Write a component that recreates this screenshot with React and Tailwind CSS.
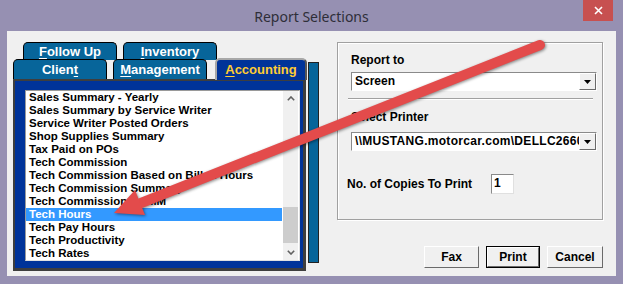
const reports = [
  'Sales Summary - Yearly',
  'Sales Summary by Service Writer',
  'Service Writer Posted Orders',
  'Shop Supplies Summary',
  'Tax Paid on POs',
  'Tech Commission',
  'Tech Commission Based on Billed Hours',
  'Tech Commission Summary',
  'Tech Commission by MM',
  'Tech Hours',
  'Tech Pay Hours',
  'Tech Productivity',
  'Tech Rates',
];

const font = "font-['Liberation_Sans',Arial,sans-serif]";

function Tab({ children, className = '' }) {
  return (
    <div
      className={`h-full flex items-center justify-center rounded-t-[5px] border border-b-0 border-black bg-[#07659a] text-white text-[13px] font-bold ${className}`}
    >
      {children}
    </div>
  );
}

function Combo({ value, className = '' }) {
  return (
    <div className="flex h-[19px] w-[246px] bg-white border border-t-[#8a8a8a] border-l-[#8a8a8a] border-r-white border-b-white">
      <div className={`flex-1 overflow-hidden whitespace-nowrap pl-[3px] text-[12px] leading-[17px] font-bold text-black ${className}`}>
        {value}
      </div>
      <div className="w-[17px] flex items-center justify-center bg-[#f0f0f0] border border-t-white border-l-white border-r-[#6a6a6a] border-b-[#6a6a6a]">
        <svg width="7" height="4" viewBox="0 0 7 4">
          <polygon points="0,0 7,0 3.5,4" fill="#000" />
        </svg>
      </div>
    </div>
  );
}

function Button({ children, width, isDefault }) {
  return (
    <div className={`h-[22px] ${width} ${isDefault ? 'border border-black' : ''}`}>
      <div className="h-full flex items-center justify-center bg-[#f0f0f0] border border-t-white border-l-white border-r-[#6a6a6a] border-b-[#6a6a6a] text-[12px] font-bold text-black">
        {children}
      </div>
    </div>
  );
}

export default function App() {
  return (
    <div className={`relative w-[623px] h-[284px] bg-[#9690b2] flex flex-col overflow-hidden ${font}`}>
      {/* Title bar */}
      <div className="relative h-[31px] flex items-center justify-center">
        <span className="font-['Noto_Sans',sans-serif] text-[14px] text-[#2e2e38] pt-[1px]">Report Selections</span>
        <div className="absolute right-[10px] top-0 w-[30px] h-[21px] bg-[#c75050] flex items-center justify-center">
          <svg width="9" height="9" viewBox="0 0 9 9">
            <path d="M1 1 L8 8 M8 1 L1 8" stroke="#fff" strokeWidth="1.6" />
          </svg>
        </div>
      </div>

      {/* Client area */}
      <div className="mx-[7px] h-[245px] bg-[#f0f0f0] flex">
        {/* Tab control */}
        <div className="ml-[6px] mt-[11px] flex">
          <div className="w-[294px] flex flex-col">
            <div className="flex h-[18px] pl-[10px] gap-[6px]">
              <Tab className="w-[94px]"><span><span className="underline underline-offset-2">F</span>ollow Up</span></Tab>
              <Tab className="w-[94px]"><span><span className="underline underline-offset-2">I</span>nventory</span></Tab>
            </div>
            <div className="flex h-[20px] -mt-[1px]">
              <Tab className="w-[94px]"><span>Clien<span className="underline underline-offset-2">t</span></span></Tab>
              <Tab className="w-[94px] ml-[6px]"><span><span className="underline underline-offset-2">M</span>anagement</span></Tab>
              <div className="relative z-10 w-[92px] ml-[8px] h-[22px] -mt-[1px] -mb-[1px] rounded-t-[5px] border-2 border-b-0 border-t-[#a8a8a8] border-l-[#a8a8a8] border-r-[#555] bg-[#003399] flex items-center justify-center text-[13px] font-bold text-[#ffcc33]">
                <span><span className="underline underline-offset-2">A</span>ccounting</span>
              </div>
            </div>
            <div className="w-[293px] h-[192px] bg-[#003399] border-2 border-[#3e3e3e] border-r-[3px] border-b-[3px]">
              <div className="ml-[10px] mt-[9px] w-[275px] h-[171px] bg-white border border-t-[#9a9a9a] border-l-[#9a9a9a] border-r-[#e0e0e0] border-b-[#e0e0e0] flex">
                <div className="w-[256px] flex flex-col">
                  {reports.map((r) => (
                    <div
                      key={r}
                      className={`h-[13px] leading-[13px] pl-[3px] text-[11.5px] font-bold whitespace-nowrap ${
                        r === 'Tech Hours' ? 'bg-[#3399ff] text-white' : 'text-black'
                      }`}
                    >
                      {r}
                    </div>
                  ))}
                </div>
                <div className="ml-[1px] w-[15px] flex flex-col bg-[#f0f0f0]">
                  <div className="h-[15px] flex items-center justify-center">
                    <svg width="8" height="5" viewBox="0 0 8 5">
                      <polyline points="0.8,4.2 4,1 7.2,4.2" fill="none" stroke="#606060" strokeWidth="1.6" />
                    </svg>
                  </div>
                  <div className="flex-1">
                    <div className="mt-[101px] h-[36px] bg-[#cdcdcd]" />
                  </div>
                  <div className="h-[15px] flex items-center justify-center">
                    <svg width="8" height="5" viewBox="0 0 8 5">
                      <polyline points="0.8,0.8 4,4 7.2,0.8" fill="none" stroke="#606060" strokeWidth="1.6" />
                    </svg>
                  </div>
                </div>
              </div>
            </div>
          </div>
          <div className="ml-[1px] mt-[20px] w-[11px] h-[201px] bg-[#07659a] border border-[#222]" />
        </div>

        {/* Right column */}
        <div className="ml-[18px] mt-[11px] flex flex-col">
          <div className="w-[266px] h-[178px] border border-[#a0a0a0] shadow-[inset_1px_1px_0_#fff,1px_1px_0_#fff] pt-[10px] flex flex-col">
            <div className="ml-[13px] h-[14px] leading-[14px] text-[12px] font-bold text-black">Report to</div>
            <div className="ml-[13px] mt-[5px]"><Combo value="Screen" /></div>
            <div className="ml-[10px] mt-[7px] w-[245px] h-[2px] border-t border-t-[#a0a0a0] border-b border-b-white" />
            <div className="ml-[13px] mt-[10px] h-[14px] leading-[14px] text-[12px] font-bold text-black">Select Printer</div>
            <div className="ml-[13px] mt-[8px]"><Combo value="\\MUSTANG.motorcar.com\DELLC2660" className="tracking-[0.3px]" /></div>
            <div className="ml-[9px] mt-[23px] h-[20px] flex items-center">
              <div className="w-[144px] text-[12px] font-bold text-black">No. of Copies To Print</div>
              <div className="w-[23px] h-[20px] bg-white border border-t-[#8a8a8a] border-l-[#8a8a8a] border-r-[#e0e0e0] border-b-[#e0e0e0] pl-[2px] text-[12px] leading-[17px] font-bold text-black">
                1
              </div>
            </div>
          </div>
          <div className="mt-[26px] flex justify-end gap-[7px]">
            <Button width="w-[55px]">Fax</Button>
            <Button width="w-[54px]" isDefault>Print</Button>
            <Button width="w-[56px]">Cancel</Button>
          </div>
        </div>
      </div>

      {/* Annotation arrow */}
      <svg
        className="absolute left-0 top-0 pointer-events-none drop-shadow-[1px_1px_1.5px_rgba(0,0,0,0.45)]"
        width="623"
        height="284"
        viewBox="0 0 623 284"
      >
        <line x1="540" y1="45" x2="141" y2="203" stroke="#e34b4b" strokeWidth="10" strokeLinecap="round" />
        <polygon points="114,213 135,190 145,215" fill="#e34b4b" />
      </svg>
    </div>
  );
}
